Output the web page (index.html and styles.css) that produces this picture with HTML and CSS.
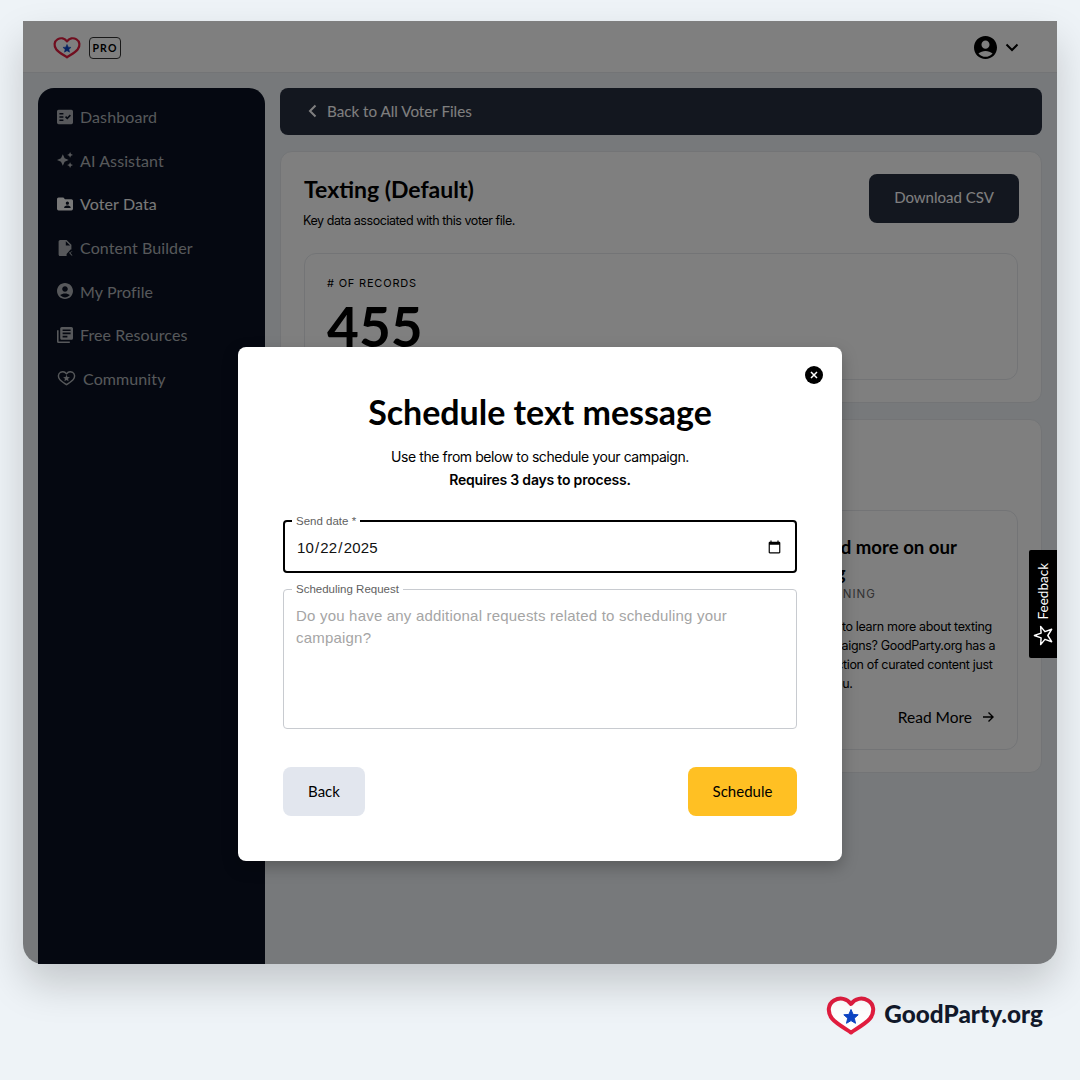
FILE: index.html
```html
<!DOCTYPE html>
<html lang="en">
<head>
  <meta charset="UTF-8">
  <meta name="viewport" content="width=device-width, initial-scale=1.0">
  <title>Schedule text message</title>
  <link rel="stylesheet" href="styles.css">
</head>
<body>
  <svg class="defs" width="0" height="0">
    <symbol id="heart" viewBox="0 0 50 40">
      <path d="M25 37.500 C20 34 10 28.500 6 23.500 C1 17 2 9 8 5.500 C14 2 21 3.500 25 9 C29 3.500 36 2 42 5.500 C48 9 49 17 44 23.500 C40 28.500 30 34 25 37.500 Z" fill="#fff" stroke="#e11d3f" stroke-width="4" stroke-linejoin="round"/>
      <polygon points="25,14.500 27.100,19.400 32.200,19.800 28.300,23.200 29.500,28.300 25,25.600 20.500,28.300 21.700,23.200 17.800,19.800 22.900,19.400" fill="#0d44c4" stroke="#0d44c4" stroke-linejoin="round"/>
    </symbol>
  </svg>

  <div class="window">
    <header class="topbar">
      <div class="brand">
        <svg class="brand-heart"><use href="#heart"/></svg>
        <span class="pro">PRO</span>
      </div>
      <div class="account">
        <svg class="account-icon" viewBox="2 2 20 20"><path d="M12 2C6.480 2 2 6.480 2 12s4.480 10 10 10 10-4.480 10-10S17.520 2 12 2zm0 4c1.930 0 3.500 1.570 3.500 3.500S13.930 13 12 13s-3.500-1.570-3.500-3.500S10.070 6 12 6zm0 14c-2.030 0-4.430-.820-6.140-2.880C7.550 15.800 9.680 15 12 15s4.450.800 6.140 2.120C16.430 19.180 14.030 20 12 20z"/></svg>
        <svg class="chevron" viewBox="0 0 14 9"><path d="M1.500 1.500 7 7l5.500-5.500"/></svg>
      </div>
    </header>

    <div class="layout">
      <nav class="sidebar">
        <a class="nav-item"><svg class="nav-icon" viewBox="2 2 20 20"><path d="M20 3H4c-1.100 0-2 .9-2 2v14c0 1.100.9 2 2 2h16c1.100 0 2-.9 2-2V5c0-1.100-.9-2-2-2zM10 17H5v-2h5v2zm0-4H5v-2h5v2zm0-4H5V7h5v2zm4.820 6L12 12.160l1.410-1.410 1.410 1.420L17.990 9l1.420 1.420L14.820 15z"/></svg>Dashboard</a>
        <a class="nav-item"><svg class="nav-icon" viewBox="1 1 22 22"><path d="M19 9l1.250-2.750L23 5l-2.750-1.250L19 1l-1.250 2.750L15 5l2.750 1.250L19 9zm-7.500.5L9 4 6.500 9.500 1 12l5.500 2.500L9 20l2.500-5.500L17 12l-5.500-2.500zM19 15l-1.250 2.750L15 19l2.750 1.250L19 23l1.250-2.750L23 19l-2.750-1.250L19 15z"/></svg>AI Assistant</a>
        <a class="nav-item active"><svg class="nav-icon" viewBox="2 2 20 20"><path d="M20 6h-8l-2-2H4c-1.100 0-1.990.9-1.990 2L2 18c0 1.100.9 2 2 2h16c1.100 0 2-.9 2-2V8c0-1.100-.9-2-2-2zm-5 3c1.100 0 2 .9 2 2s-.9 2-2 2-2-.9-2-2 .9-2 2-2zm4 8h-8v-1c0-1.330 2.670-2 4-2s4 .670 4 2v1z"/></svg>Voter Data</a>
        <a class="nav-item"><svg class="nav-icon" viewBox="2 2 20 20"><path d="M14 2H6c-1.100 0-2 .9-2 2v16c0 1.100.9 2 2 2h8v-2.500l5-5.500h1V8l-6-6zm-1 7V3.500L18.500 9H13zM17 18l3 3.500h1.500L18.500 18l3-1.500h-1.500z"/></svg>Content Builder</a>
        <a class="nav-item"><svg class="nav-icon" viewBox="2 2 20 20"><path d="M12 2C6.480 2 2 6.480 2 12s4.480 10 10 10 10-4.480 10-10S17.520 2 12 2zm0 4c1.930 0 3.500 1.570 3.500 3.500S13.930 13 12 13s-3.500-1.570-3.500-3.500S10.070 6 12 6zm0 14c-2.030 0-4.430-.820-6.140-2.880C7.550 15.800 9.680 15 12 15s4.450.800 6.140 2.120C16.430 19.180 14.030 20 12 20z"/></svg>My Profile</a>
        <a class="nav-item"><svg class="nav-icon" viewBox="2 2 20 20"><path d="M4 6H2v14c0 1.100.9 2 2 2h14v-2H4V6zm16-4H8c-1.100 0-2 .9-2 2v12c0 1.100.9 2 2 2h12c1.100 0 2-.9 2-2V4c0-1.100-.9-2-2-2zm-1 9H9V9h10v2zm-4 4H9v-2h6v2zm4-8H9V5h10v2z"/></svg>Free Resources</a>
        <a class="nav-item community"><svg class="nav-icon-wide" viewBox="0 0 20 16"><path class="outline" d="M10 15C8 13.600 4.400 11.400 2.800 9.400.8 6.800 1.200 3.600 3.400 2.200 5.800.8 8.400 1.400 10 3.600c1.600-2.200 4.200-2.800 6.600-1.400 2.200 1.400 2.600 4.600.6 7.200C15.600 11.400 12 13.600 10 15z"/><polygon points="10,4.500 11,7 13.600,7.200 11.600,8.900 12.200,11.400 10,10 7.800,11.400 8.400,8.900 6.400,7.200 9,7"/></svg>Community</a>
      </nav>

      <main class="main">
        <a class="back-bar">
          <svg class="back-icon" viewBox="0 0 9 14"><path d="M7.500 1.500 2 7l5.500 5.500"/></svg>
          Back to All Voter Files
        </a>

        <section class="card">
          <div class="card-head">
            <div>
              <h2>Texting (Default)</h2>
              <p class="card-sub">Key data associated with this voter file.</p>
            </div>
            <a class="btn-dark">Download CSV</a>
          </div>
          <div class="stat">
            <div class="stat-label"># OF RECORDS</div>
            <div class="stat-value">455</div>
          </div>
        </section>

        <section class="card card-learn">
          <div class="learn-grid">
            <article class="blog-card"></article>
            <article class="blog-card"></article>
            <article class="blog-card">
              <h3>Read more on our blog</h3>
              <div class="blog-tag">LEARNING</div>
              <p>Want to learn more about texting campaigns? GoodParty.org has a collection of curated content just for you.</p>
              <a class="read-more">Read More
                <svg class="arrow" viewBox="0 0 12 12"><path d="M1 6h10M6.500 1.500 11 6l-4.500 4.500"/></svg>
              </a>
            </article>
          </div>
        </section>
      </main>
    </div>

    <div class="scrim">
      <div class="modal">
        <button class="close" aria-label="Close">
          <svg viewBox="0 0 8 8"><path d="M1 1l6 6M7 1 1 7"/></svg>
        </button>
        <h1>Schedule text message</h1>
        <p class="modal-text">Use the from below to schedule your campaign.</p>
        <p class="modal-text strong">Requires 3 days to process.</p>

        <fieldset class="field field-focus">
          <legend>Send date *</legend>
          <input class="date-input" type="date" value="2025-10-22">
        </fieldset>
        <fieldset class="field field-area">
          <legend>Scheduling Request</legend>
          <textarea class="area-input" placeholder="Do you have any additional requests related to scheduling your campaign?"></textarea>
        </fieldset>

        <div class="modal-actions">
          <button class="btn btn-back">Back</button>
          <button class="btn btn-schedule">Schedule</button>
        </div>
      </div>
    </div>

    <a class="feedback">
      <span class="feedback-label">Feedback</span>
      <svg class="feedback-star" viewBox="0 0 24 24"><polygon points="2.500,12 9.500,9.500 9,2.500 13.500,8 20.500,5.500 16.500,12 20.500,18.500 13.500,16 9,21.500 9.500,14.500"/></svg>
    </a>
  </div>

  <footer class="page-logo">
    <svg class="page-heart"><use href="#heart"/></svg>
    <span class="page-name">GoodParty.org</span>
  </footer>
</body>
</html>
```

FILE: styles.css
```css
* {
  margin: 0;
  padding: 0;
  box-sizing: border-box;
}

body {
  font-family: 'Lato', sans-serif;
  background-color: #eef3f7;
  color: #000;
  width: 1080px;
  height: 1080px;
  padding: 21px 23px 0;
  overflow: hidden;
}

.defs {
  position: absolute;
}

/* App window */
.window {
  position: relative;
  display: flex;
  flex-direction: column;
  height: 943px;
  background-color: #eef3f7;
  border-radius: 0 0 20px 20px;
  box-shadow: 0 20px 40px rgba(0, 0, 0, 0.18);
}

.topbar {
  display: flex;
  justify-content: space-between;
  align-items: center;
  height: 52px;
  padding: 2px 38px 0 30px;
  background-color: #fff;
  border-bottom: 1px solid #e6e9ed;
}

.brand {
  display: flex;
  align-items: center;
  gap: 8px;
}

.brand-heart {
  width: 28px;
  height: 25px;
}

.pro {
  width: 32px;
  height: 22px;
  border: 1px solid #333;
  border-radius: 4px;
  font-size: 10.500px;
  font-weight: 700;
  letter-spacing: 1.200px;
  line-height: 20px;
  text-align: center;
}

.account {
  display: flex;
  align-items: center;
  gap: 8px;
}

.account-icon {
  width: 23px;
  height: 23px;
}

.chevron {
  width: 14px;
  height: 9px;
  fill: none;
  stroke: #000;
  stroke-width: 2;
}

.layout {
  display: flex;
  flex: 1;
  min-height: 0;
  padding: 15px 15px 0;
  gap: 15px;
}

/* Sidebar */
.sidebar {
  width: 227px;
  flex-shrink: 0;
  padding: 8px 19px;
  background-color: #0a1122;
  border-radius: 16px 16px 0 0;
}

.nav-item {
  display: flex;
  align-items: center;
  height: 43.600px;
  gap: 7px;
  padding-bottom: 2px;
  font-size: 16px;
  letter-spacing: 0.1px;
  color: #aeb1b6;
}

.nav-item.active {
  color: #f2f2f2;
}

.nav-icon {
  width: 16px;
  height: 16px;
  fill: currentColor;
}

.nav-icon-wide {
  width: 19px;
  height: 16px;
  fill: currentColor;
}

.nav-icon-wide .outline {
  fill: none;
  stroke: currentColor;
  stroke-width: 1.500;
  stroke-linejoin: round;
}

/* Main column */
.main {
  flex: 1;
  display: flex;
  flex-direction: column;
  gap: 16px;
}

.back-bar {
  display: flex;
  align-items: center;
  gap: 10px;
  height: 47px;
  padding: 0 28px 2px;
  background-color: #272e3f;
  border-radius: 8px;
  font-size: 15.200px;
  color: #fff;
}

.back-icon {
  width: 9px;
  height: 14px;
  fill: none;
  stroke: #fff;
  stroke-width: 2;
}

.card {
  height: 252px;
  padding: 22px 23px;
  background-color: #fff;
  border: 1px solid #e6e9ed;
  border-radius: 12px;
}

.card-head {
  display: flex;
  justify-content: space-between;
  align-items: flex-start;
  margin-bottom: 24px;
}

.card-head h2 {
  margin-top: 1px;
  font-size: 23px;
  font-weight: 700;
  line-height: 28px;
}

.card-sub {
  margin-top: 10px;
  margin-left: -1px;
  font-family: 'Inter', sans-serif;
  font-size: 12.500px;
  letter-spacing: -0.45px;
  line-height: 16px;
}

.btn-dark {
  width: 150px;
  height: 49px;
  margin-right: -1px;
  background-color: #272e3f;
  border-radius: 8px;
  color: #fff;
  font-size: 15px;
  line-height: 47px;
  text-align: center;
}

.stat {
  height: 127px;
  padding: 22px 22px;
  border: 1px solid #e6e9ed;
  border-radius: 12px;
}

.stat-label {
  font-family: 'Inter', sans-serif;
  font-size: 11px;
  letter-spacing: 0.8px;
  line-height: 14px;
}

.stat-value {
  margin-top: 5px;
  font-size: 55px;
  font-weight: 700;
  line-height: 62px;
}

.card-learn {
  height: 354px;
  padding: 90px 23px 22px;
}

.learn-grid {
  display: grid;
  grid-template-columns: 1fr 1fr 232px;
  gap: 16px;
  height: 240px;
}

.blog-card {
  display: flex;
  flex-direction: column;
  padding: 23px 20px 23px 23px;
  border: 1px solid #e6e9ed;
  border-radius: 12px;
}

.blog-card h3 {
  max-width: 165px;
  font-size: 18.600px;
  font-weight: 700;
  line-height: 26px;
}

.blog-tag {
  margin-top: 1px;
  font-family: 'Inter', sans-serif;
  font-size: 11.500px;
  letter-spacing: 1px;
  line-height: 14px;
  color: #666;
}

.blog-card p {
  margin-top: 16px;
  font-family: 'Inter', sans-serif;
  font-size: 12.500px;
  letter-spacing: -0.35px;
  line-height: 19px;
}

.read-more {
  display: flex;
  justify-content: flex-end;
  align-items: center;
  gap: 10px;
  margin-top: auto;
  margin-right: 3px;
  font-size: 15.500px;
}

.arrow {
  width: 12px;
  height: 12px;
  fill: none;
  stroke: #000;
  stroke-width: 1.400;
}

/* Overlay and modal */
.scrim {
  position: absolute;
  inset: 0;
  display: flex;
  justify-content: center;
  align-items: flex-start;
  padding-top: 326px;
  background-color: rgba(0, 0, 0, 0.5);
  border-radius: 0 0 20px 20px;
}

.modal {
  position: relative;
  width: 604px;
  height: 514px;
  padding: 45px;
  background-color: #fff;
  border-radius: 8px;
  box-shadow: 0 6px 16px rgba(0, 0, 0, 0.25);
}

.close {
  position: absolute;
  top: 19px;
  right: 19px;
  width: 18px;
  height: 18px;
  display: flex;
  align-items: center;
  justify-content: center;
  background-color: #000;
  border: none;
  border-radius: 50%;
}

.close svg {
  width: 8px;
  height: 8px;
  fill: none;
  stroke: #fff;
  stroke-width: 1.500;
}

.modal h1 {
  margin-bottom: 14px;
  font-size: 34px;
  font-weight: 700;
  letter-spacing: -0.03px;
  line-height: 40px;
  text-align: center;
}

.modal-text {
  font-family: 'Inter', sans-serif;
  font-size: 14px;
  letter-spacing: -0.42px;
  line-height: 22.500px;
  text-align: center;
}

.modal-text.strong {
  font-weight: 600;
  letter-spacing: -0.2px;
}

.field {
  display: block;
  width: 514px;
  border: 1px solid #c8cbd0;
  border-radius: 4px;
  padding: 0 12px;
}

.field legend {
  margin-left: -4px;
  padding: 0 4px;
  font-family: 'Liberation Sans', sans-serif;
  font-size: 11.500px;
  line-height: 12px;
  color: #5f5f5f;
}

.field-focus {
  height: 58px;
  margin-top: 24px;
  border: 2px solid #000;
}

.field-focus legend {
  margin-left: -5px;
}

.date-input {
  display: block;
  width: calc(100% + 2px);
  height: 40px;
  margin-left: -1px;
  border: none;
  outline: none;
  background: none;
  font-family: 'Liberation Sans', sans-serif;
  font-size: 15px;
  letter-spacing: 0.15px;
  color: #111;
}

.field-area {
  height: 146px;
  margin-top: 10px;
}

.area-input {
  display: block;
  width: 100%;
  height: 120px;
  padding-top: 10px;
  border: none;
  outline: none;
  resize: none;
  font-family: 'Liberation Sans', sans-serif;
  font-size: 15px;
  letter-spacing: 0.2px;
  line-height: 22px;
}

.area-input::placeholder {
  color: #a5a5a5;
}

.modal-actions {
  display: flex;
  justify-content: space-between;
  margin-top: 38px;
}

.btn {
  height: 49px;
  padding-bottom: 2px;
  border: none;
  border-radius: 8px;
  font-family: 'Lato', sans-serif;
  font-size: 15px;
  color: #000;
}

.btn-back {
  width: 82px;
  background-color: #e2e6ee;
}

.btn-schedule {
  width: 109px;
  background-color: #ffc023;
}

/* Feedback tab */
.feedback {
  position: absolute;
  top: 529px;
  right: 0;
  display: flex;
  flex-direction: column;
  align-items: center;
  width: 28px;
  height: 108px;
  padding-top: 13px;
  background-color: #000;
  color: #fff;
  border-radius: 2px 0 0 2px;
}

.feedback-label {
  writing-mode: vertical-rl;
  transform: rotate(180deg);
  font-family: 'Lato', sans-serif;
  font-size: 13.500px;
  line-height: 14px;
}

.feedback-star {
  width: 23px;
  height: 23px;
  margin-top: 5px;
  flex-shrink: 0;
  fill: none;
  stroke: #fff;
  stroke-width: 1.500;
  stroke-linejoin: round;
}

/* Logo under the window */
.page-logo {
  display: flex;
  justify-content: flex-end;
  align-items: center;
  gap: 8px;
  margin-top: 31px;
  padding-right: 14px;
}

.page-heart {
  width: 50px;
  height: 40px;
}

.page-name {
  margin-bottom: 4px;
  font-size: 24.300px;
  font-weight: 900;
  color: #12192b;
}
```
